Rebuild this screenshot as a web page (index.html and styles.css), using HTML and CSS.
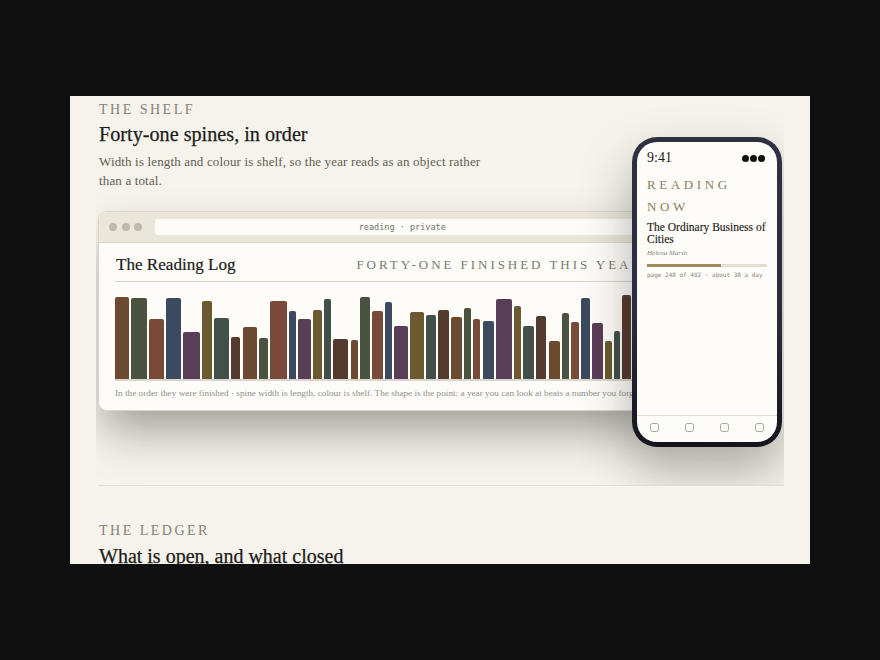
FILE: index.html
```html
<!DOCTYPE html>
<html lang="en">
<head>
<meta charset="utf-8">
<title>The Reading Log</title>
<link rel="stylesheet" href="styles.css">
</head>
<body>
<main class="frame">
  <section class="shelf">
    <p class="eyebrow">THE SHELF</p>
    <h2 class="heading">Forty-one spines, in order</h2>
    <p class="lede">Width is length and colour is shelf, so the year reads as an object rather than a total.</p>
    <div class="stage">
      <div class="window">
        <div class="titlebar">
          <span class="dot"></span><span class="dot"></span><span class="dot"></span>
          <div class="address">reading · private</div>
        </div>
        <div class="log">
          <header class="log-head">
            <h3 class="log-title">The Reading Log</h3>
            <span class="log-count">FORTY-ONE FINISHED THIS YEAR</span>
          </header>
          <div class="spines">
            <i class="c1" style="width:14.3px;height:81.7px"></i>
            <i class="c2" style="width:16px;height:81px"></i>
            <i class="c3" style="width:14.3px;height:59.7px"></i>
            <i class="c4" style="width:15.3px;height:80.7px"></i>
            <i class="c5" style="width:17px;height:46.7px"></i>
            <i class="c6" style="width:9.3px;height:78.3px"></i>
            <i class="c7" style="width:15.3px;height:61.3px"></i>
            <i class="c8" style="width:9.3px;height:42px"></i>
            <i class="c1" style="width:14.7px;height:52.3px"></i>
            <i class="c2" style="width:9px;height:41px"></i>
            <i class="c3" style="width:16.3px;height:78.3px"></i>
            <i class="c4" style="width:7px;height:68px"></i>
            <i class="c5" style="width:13px;height:59.7px"></i>
            <i class="c6" style="width:9.3px;height:68.7px"></i>
            <i class="c7" style="width:6.7px;height:80px"></i>
            <i class="c8" style="width:15.3px;height:40px"></i>
            <i class="c1" style="width:7px;height:38.7px"></i>
            <i class="c2" style="width:10.3px;height:82.3px"></i>
            <i class="c3" style="width:10.7px;height:68px"></i>
            <i class="c4" style="width:6.7px;height:76.7px"></i>
            <i class="c5" style="width:14.3px;height:53.3px"></i>
            <i class="c6" style="width:14.3px;height:67px"></i>
            <i class="c7" style="width:10px;height:63.7px"></i>
            <i class="c8" style="width:10.7px;height:69.3px"></i>
            <i class="c1" style="width:11px;height:62px"></i>
            <i class="c2" style="width:6.3px;height:71px"></i>
            <i class="c3" style="width:7.7px;height:60.3px"></i>
            <i class="c4" style="width:11px;height:58px"></i>
            <i class="c5" style="width:16.3px;height:80px"></i>
            <i class="c6" style="width:7.3px;height:73.3px"></i>
            <i class="c7" style="width:10.7px;height:53.3px"></i>
            <i class="c8" style="width:10.3px;height:63px"></i>
            <i class="c1" style="width:11px;height:38px"></i>
            <i class="c2" style="width:7.7px;height:66.3px"></i>
            <i class="c3" style="width:7.7px;height:57.3px"></i>
            <i class="c4" style="width:8.3px;height:80.7px"></i>
            <i class="c5" style="width:11px;height:56.3px"></i>
            <i class="c6" style="width:7.3px;height:38px"></i>
            <i class="c7" style="width:6.3px;height:47.7px"></i>
            <i class="c8" style="width:9px;height:84px"></i>
          </div>
          <p class="caption">In the order they were finished · spine width is length, colour is shelf. The shape is the point: a year you can look at beats a number you forget.</p>
        </div>
      </div>
      <aside class="phone">
        <div class="screen">
          <div class="status"><span class="time">9:41</span><span class="signal"><s></s><s></s><s></s></span></div>
          <div class="now">
            <p class="now-label">READING NOW</p>
            <h4 class="book">The Ordinary Business of Cities</h4>
            <p class="author">Helena Marsh</p>
            <div class="progress"><div class="progress-fill" style="width:61.7%"></div></div>
            <p class="pace">page 248 of 402 · about 38 a day</p>
          </div>
          <nav class="tabs"><b></b><b></b><b></b><b></b></nav>
        </div>
      </aside>
    </div>
  </section>
  <section class="ledger">
    <p class="eyebrow">THE LEDGER</p>
    <h2 class="heading">What is open, and what closed</h2>
  </section>
</main>
</body>
</html>
```

FILE: styles.css
```css
* { box-sizing: border-box; }
html, body { margin: 0; height: 660px; overflow: hidden; }
body { background: #111; padding: 96px 70px 0; font-family: "Liberation Serif", serif; }
p, h2, h3, h4 { margin: 0; font-weight: 400; }

.frame { height: 468px; overflow: hidden; background: #f6f3ec; padding: 0 26px; }

.shelf { height: 389px; padding-left: 2px; overflow: hidden; }
.eyebrow { font-size: 14px; line-height: 28px; height: 24px; letter-spacing: 2.5px; color: #85817a; padding-left: 1px; }
.heading { font-size: 20.2px; line-height: 26px; color: #1d1c1a; padding-left: 1px; margin-top: 1px; -webkit-text-stroke: .25px #1d1c1a; }
.lede { width: 392px; font-size: 13px; line-height: 19px; letter-spacing: .15px; color: #625d53; margin-top: 5px; padding-left: 1px; }

.stage { position: relative; margin-top: 21px; }

.window { width: 567px; height: 200px; background: #fdfcf8; border: 1px solid #dcd7ca; border-radius: 9px; overflow: hidden; box-shadow: 0 24px 48px -6px rgba(30,28,20,.42); }
.titlebar { height: 31px; background: #ebe6da; border-bottom: 1px solid #dcd7ca; display: flex; align-items: center; padding: 0 14px 0 10px; gap: 4.5px; }
.dot { width: 8px; height: 8px; border-radius: 50%; background: #bdb8ab; }
.address { flex: 1; margin-left: 8px; height: 16px; border-radius: 3px; background: #fdfcf8; text-align: center; font: 8.5px/16px "DejaVu Sans Mono", monospace; color: #75716a; }

.log { padding: 0 16px; }
.log-head { height: 39px; display: flex; justify-content: space-between; align-items: center; border-bottom: 1px solid #d9d5cb; white-space: nowrap; padding: 5px 5px 0 1px; }
.log-title { font-size: 17.1px; color: #1d1c1a; -webkit-text-stroke: .2px #1d1c1a; }
.log-count { font-size: 13px; letter-spacing: 2.95px; color: #7d796f; }

.spines { margin-top: 12px; height: 87px; display: flex; align-items: flex-end; gap: 2.1px; border-bottom: 2px solid #d9d5cb; }
.spines i { display: block; flex: none; border-radius: 2px 2px 0 0; }
.c1 { background: #6b4a2f; }
.c2 { background: #4a5240; }
.c3 { background: #7a4a38; }
.c4 { background: #3b4a5e; }
.c5 { background: #5a3d57; }
.c6 { background: #6b5a30; }
.c7 { background: #42504a; }
.c8 { background: #553a30; }

.caption { margin-top: 5px; font-size: 9.2px; line-height: 14px; letter-spacing: .02px; color: #93908a; white-space: nowrap; }

.phone { position: absolute; left: 534px; top: -74px; width: 150px; height: 310px; padding: 5px; border-radius: 25px; background: linear-gradient(#2d3142 0%, #2a2d3c 55%, #14151c 100%); box-shadow: 0 24px 50px rgba(30,28,20,.34); }
.screen { height: 100%; border-radius: 20px; overflow: hidden; background: #fdfcf8; display: flex; flex-direction: column; }
.status { display: flex; justify-content: space-between; align-items: center; height: 28px; padding: 4px 12px 0 10px; }
.time { font-size: 14px; color: #1d1c1a; }
.signal { display: flex; gap: 1px; }
.signal s { width: 7px; height: 7px; border-radius: 50%; background: #111; }
.now { flex: 1; padding: 0 10px; }
.now-label { font-size: 13px; line-height: 22px; letter-spacing: 3.6px; color: #8f7d5e; margin-top: 4px; }
.book { font-size: 11.5px; line-height: 12px; color: #1d1c1a; margin-top: 3px; -webkit-text-stroke: .15px #1d1c1a; }
.author { font-size: 7px; font-style: italic; line-height: 10px; color: #8a867c; margin-top: 3px; }
.progress { height: 3px; margin-top: 6px; background: #e3dfd5; }
.progress-fill { height: 100%; background: #a68a5f; }
.pace { font: 6px/8px "DejaVu Sans Mono", monospace; color: #8a867c; margin-top: 4px; white-space: nowrap; }
.tabs { height: 27px; border-top: 1px solid #e3dfd5; display: flex; justify-content: space-around; align-items: center; padding-bottom: 3px; }
.tabs b { width: 9px; height: 9px; border: 1px solid #aaa698; border-radius: 2.5px; }

.ledger { margin-left: 2px; padding-top: 31px; border-top: 1px solid #e3dfd5; }
.ledger .eyebrow { padding-left: 1px; }
.ledger .heading { font-size: 20px; margin-top: 2px; }
```
